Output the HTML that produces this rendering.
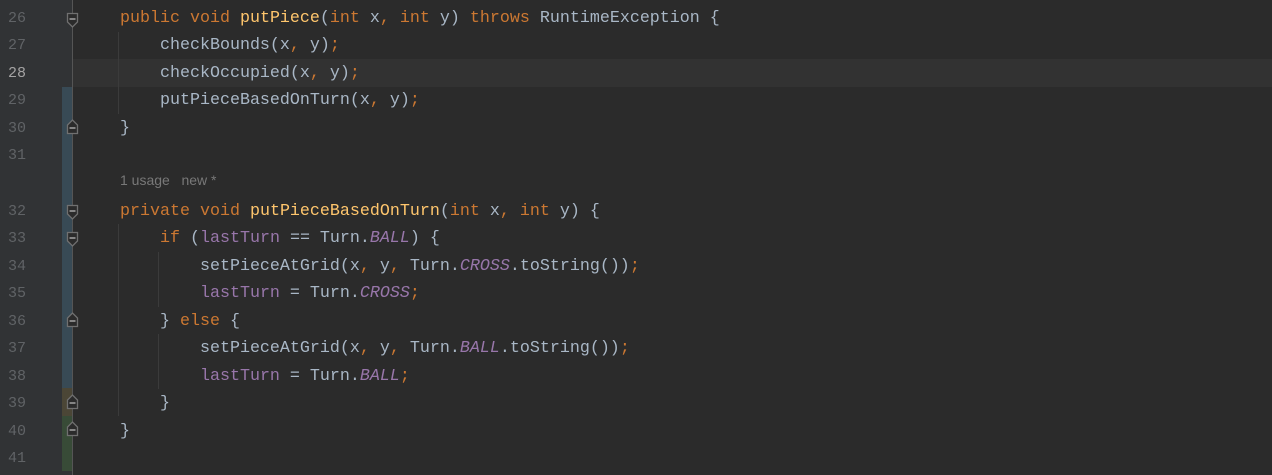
<!DOCTYPE html>
<html><head><style>
body{margin:0;width:1272px;height:475px;background:#2b2b2b;overflow:hidden;position:relative;font-family:"Liberation Mono",monospace;}
.g{position:absolute;left:0;top:0;width:72px;height:475px;background:#313335;}
.vl{position:absolute;left:72px;top:0;width:1px;height:475px;background:#555555;}
.cur{position:absolute;left:73px;top:59px;width:1199px;height:28px;background:#323232;}
.n{position:absolute;left:8px;width:40px;font-size:15px;color:#606366;line-height:27px;}
.l{position:absolute;left:120px;font-size:16.67px;line-height:27px;color:#a9b7c6;white-space:pre;}
.k{color:#cc7832}.m{color:#ffc66d}.f{color:#9876aa}.i{color:#9876aa;font-style:italic}
.ig{position:absolute;width:1px;background:#3b3b3b;}
.bar{position:absolute;left:62px;width:10px;}
.inlay{position:absolute;left:120px;top:172px;font-family:"Liberation Sans",sans-serif;font-size:14px;color:#787878;}
svg.fi{position:absolute;left:66px;}
</style></head><body>
<div class="g"></div>
<div class="bar" style="top:87px;height:301px;background:#384a55"></div>
<div class="bar" style="top:388px;height:28px;background:#4b4636"></div>
<div class="bar" style="top:416px;height:55px;background:#384b37"></div>
<div class="vl"></div>
<div class="cur"></div>
<div class="ig" style="left:118px;top:32px;height:82px"></div>
<div class="ig" style="left:118px;top:224px;height:192px"></div>
<div class="ig" style="left:158px;top:252px;height:55px"></div>
<div class="ig" style="left:158px;top:334px;height:55px"></div>

<div class="n" style="top:5px">26</div>
<div class="n" style="top:32px">27</div>
<div class="n" style="top:60px;color:#a4a3a3">28</div>
<div class="n" style="top:87px">29</div>
<div class="n" style="top:115px">30</div>
<div class="n" style="top:142px">31</div>
<div class="n" style="top:198px">32</div>
<div class="n" style="top:225px">33</div>
<div class="n" style="top:253px">34</div>
<div class="n" style="top:280px">35</div>
<div class="n" style="top:308px">36</div>
<div class="n" style="top:335px">37</div>
<div class="n" style="top:363px">38</div>
<div class="n" style="top:390px">39</div>
<div class="n" style="top:418px">40</div>
<div class="n" style="top:445px">41</div>

<svg class="fi" style="top:12px" width="13" height="17"><path d="M1.5 1.5H11.5V10L6.5 15L1.5 10Z" fill="#2b2b2b" stroke="#707070" stroke-width="1.3"/><path d="M3.5 7H9.5" stroke="#909090" stroke-width="1.8"/></svg>
<svg class="fi" style="top:204px" width="13" height="17"><path d="M1.5 1.5H11.5V10L6.5 15L1.5 10Z" fill="#2b2b2b" stroke="#707070" stroke-width="1.3"/><path d="M3.5 7H9.5" stroke="#909090" stroke-width="1.8"/></svg>
<svg class="fi" style="top:231px" width="13" height="17"><path d="M1.5 1.5H11.5V10L6.5 15L1.5 10Z" fill="#2b2b2b" stroke="#707070" stroke-width="1.3"/><path d="M3.5 7H9.5" stroke="#909090" stroke-width="1.8"/></svg>
<svg class="fi" style="top:118px" width="13" height="17"><path d="M1.5 15.5H11.5V7L6.5 2L1.5 7Z" fill="#2b2b2b" stroke="#707070" stroke-width="1.3"/><path d="M3.5 10H9.5" stroke="#909090" stroke-width="1.8"/></svg>
<svg class="fi" style="top:311px" width="13" height="17"><path d="M1.5 15.5H11.5V7L6.5 2L1.5 7Z" fill="#2b2b2b" stroke="#707070" stroke-width="1.3"/><path d="M3.5 10H9.5" stroke="#909090" stroke-width="1.8"/></svg>
<svg class="fi" style="top:393px" width="13" height="17"><path d="M1.5 15.5H11.5V7L6.5 2L1.5 7Z" fill="#2b2b2b" stroke="#707070" stroke-width="1.3"/><path d="M3.5 10H9.5" stroke="#909090" stroke-width="1.8"/></svg>
<svg class="fi" style="top:420px" width="13" height="17"><path d="M1.5 15.5H11.5V7L6.5 2L1.5 7Z" fill="#2b2b2b" stroke="#707070" stroke-width="1.3"/><path d="M3.5 10H9.5" stroke="#909090" stroke-width="1.8"/></svg>

<div class="l" style="top:5px"><span class="k">public void </span><span class="m">putPiece</span>(<span class="k">int </span>x<span class="k">, int </span>y) <span class="k">throws </span>RuntimeException {</div>
<div class="l" style="top:32px">    checkBounds(x<span class="k">, </span>y)<span class="k">;</span></div>
<div class="l" style="top:60px">    checkOccupied(x<span class="k">, </span>y)<span class="k">;</span></div>
<div class="l" style="top:87px">    putPieceBasedOnTurn(x<span class="k">, </span>y)<span class="k">;</span></div>
<div class="l" style="top:115px">}</div>
<div class="inlay">1 usage &nbsp; new *</div>
<div class="l" style="top:198px"><span class="k">private void </span><span class="m">putPieceBasedOnTurn</span>(<span class="k">int </span>x<span class="k">, int </span>y) {</div>
<div class="l" style="top:225px">    <span class="k">if </span>(<span class="f">lastTurn</span> == Turn.<span class="i">BALL</span>) {</div>
<div class="l" style="top:253px">        setPieceAtGrid(x<span class="k">, </span>y<span class="k">, </span>Turn.<span class="i">CROSS</span>.toString())<span class="k">;</span></div>
<div class="l" style="top:280px">        <span class="f">lastTurn</span> = Turn.<span class="i">CROSS</span><span class="k">;</span></div>
<div class="l" style="top:308px">    } <span class="k">else </span>{</div>
<div class="l" style="top:335px">        setPieceAtGrid(x<span class="k">, </span>y<span class="k">, </span>Turn.<span class="i">BALL</span>.toString())<span class="k">;</span></div>
<div class="l" style="top:363px">        <span class="f">lastTurn</span> = Turn.<span class="i">BALL</span><span class="k">;</span></div>
<div class="l" style="top:390px">    }</div>
<div class="l" style="top:418px">}</div>
</body></html>
